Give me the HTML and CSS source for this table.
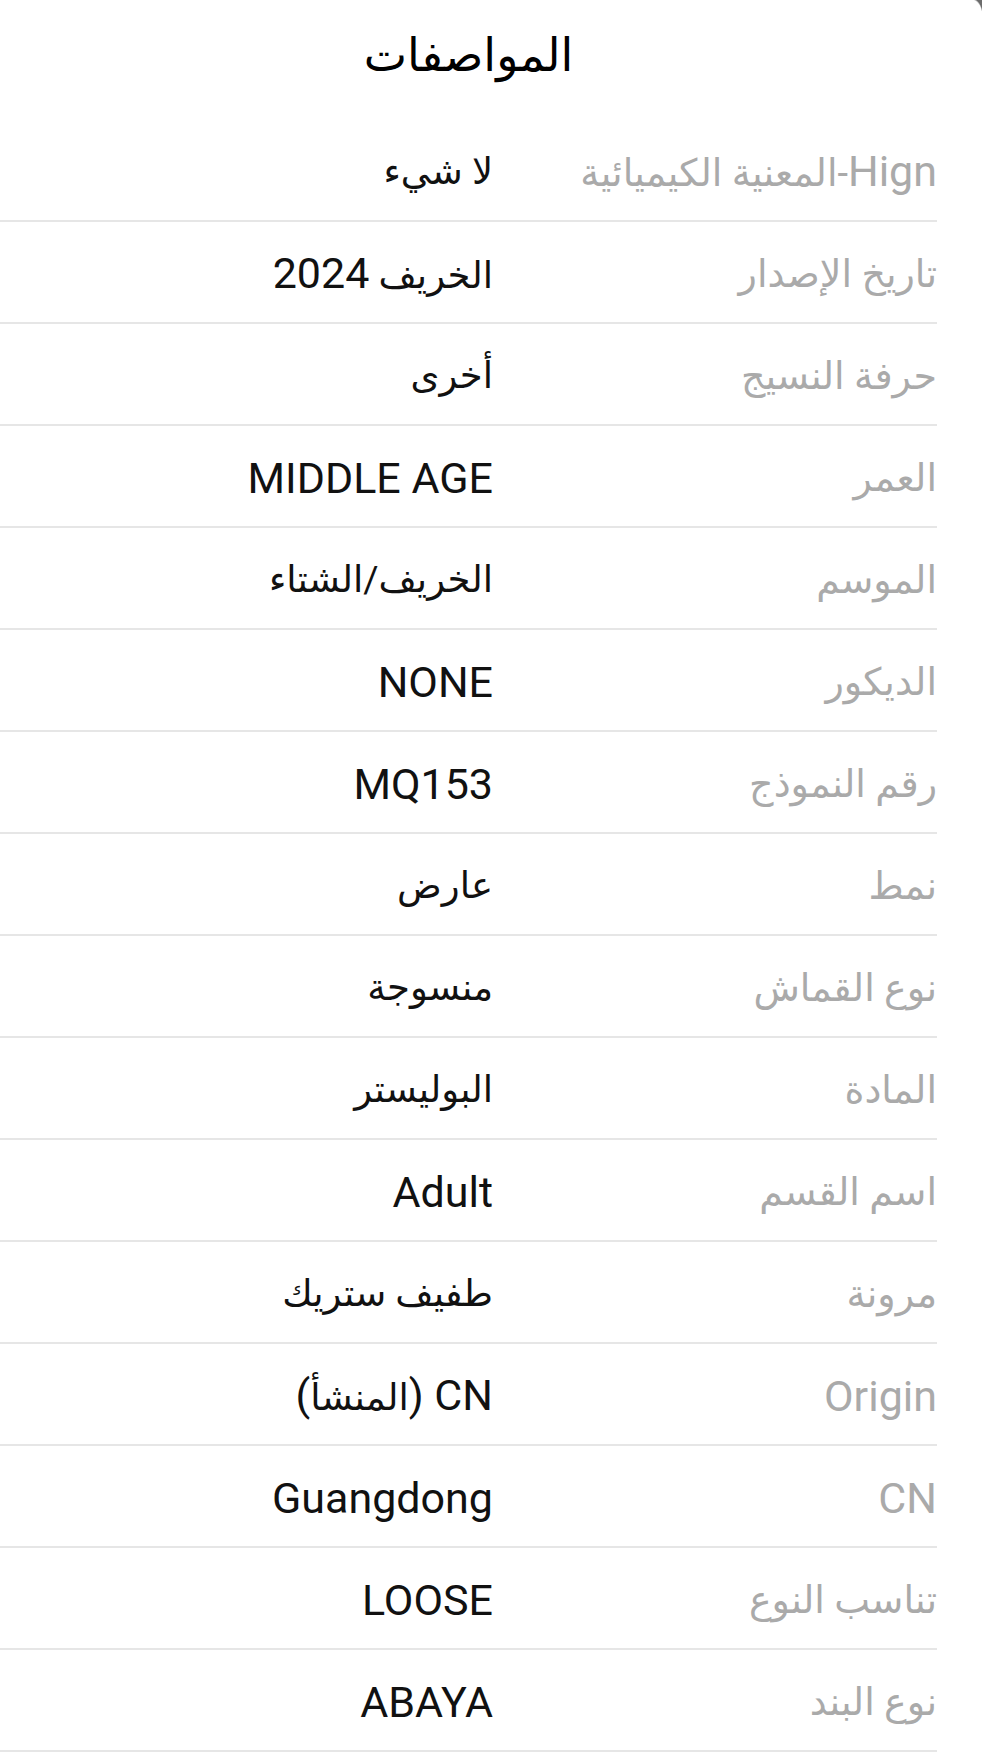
FILE: index.html
```html
<!DOCTYPE html>
<html lang="ar" dir="rtl">
<head>
<meta charset="utf-8">
<title>المواصفات</title>
<link rel="stylesheet" href="styles.css">
</head>
<body>
<div class="sheet">
  <span class="corner"></span>
  <h1 class="title">المواصفات</h1>
  <ul class="specs">
    <li class="row"><span class="label"><span class="en">Hign</span>-المعنية الكيميائية</span><span class="value">لا شيء</span></li>
    <li class="row"><span class="label">تاريخ الإصدار</span><span class="value">الخريف <span class="en">2024</span></span></li>
    <li class="row"><span class="label">حرفة النسيج</span><span class="value">أخرى</span></li>
    <li class="row"><span class="label">العمر</span><span class="value en">MIDDLE AGE</span></li>
    <li class="row"><span class="label">الموسم</span><span class="value">الخريف/الشتاء</span></li>
    <li class="row"><span class="label">الديكور</span><span class="value en">NONE</span></li>
    <li class="row"><span class="label">رقم النموذج</span><span class="value en">MQ153</span></li>
    <li class="row"><span class="label">نمط</span><span class="value">عارض</span></li>
    <li class="row"><span class="label">نوع القماش</span><span class="value">منسوجة</span></li>
    <li class="row"><span class="label">المادة</span><span class="value">البوليستر</span></li>
    <li class="row"><span class="label">اسم القسم</span><span class="value en">Adult</span></li>
    <li class="row"><span class="label">مرونة</span><span class="value">طفيف ستريك</span></li>
    <li class="row"><span class="label en">Origin</span><span class="value"><span class="en">CN (</span>المنشأ<span class="en">)</span></span></li>
    <li class="row"><span class="label en">CN</span><span class="value en">Guangdong</span></li>
    <li class="row"><span class="label">تناسب النوع</span><span class="value en">LOOSE</span></li>
    <li class="row"><span class="label">نوع البند</span><span class="value en">ABAYA</span></li>
  </ul>
</div>
</body>
</html>
```
FILE: styles.css
```css
html, body {
  margin: 0;
  padding: 0;
  background: #ffffff;
}
body {
  font-family: Roboto, "DejaVu Sans", sans-serif;
  color: #111111;
}
.sheet {
  position: relative;
  padding-right: 45px;
  min-height: 1755px;
  box-sizing: border-box;
}
.corner {
  position: absolute;
  top: 0;
  right: 0;
  width: 10px;
  height: 16px;
  background: radial-gradient(ellipse at 0% 100%, #ffffff 0, #ffffff 70%, #6c6c6c 78%);
}
.title {
  margin: 0;
  height: 120px;
  display: flex;
  align-items: center;
  justify-content: center;
  padding-bottom: 10px;
  box-sizing: border-box;
  font-size: 46px;
  font-weight: 400;
  color: #000000;
}
.specs {
  list-style: none;
  margin: 0;
  padding: 0;
}
.row {
  display: grid;
  grid-template-columns: 444px 1fr;
  align-items: center;
  height: 96px;
  padding-top: 4px;
  border-bottom: 2px solid #e6e6e6;
  font-size: 37px;
  line-height: 50px;
  box-sizing: content-box;
}
.label {
  color: #aaaaaa;
  white-space: nowrap;
  font-size: 38px;
}
.value {
  color: #111111;
  white-space: nowrap;
}
.en {
  font-size: 43px;
}
```
